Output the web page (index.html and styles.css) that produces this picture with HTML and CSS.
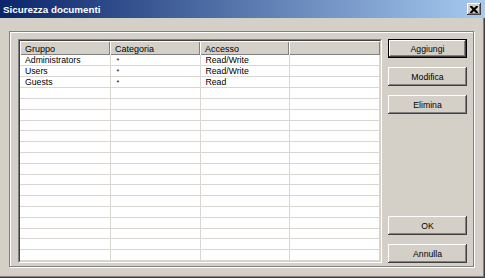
FILE: index.html
```html
<!DOCTYPE html>
<html lang="it">
<head>
    <meta charset="UTF-8">
    <title>Sicurezza documenti</title>
    <link rel="stylesheet" href="styles.css">
</head>
<body>
    <div class="dialog">
        <div class="titlebar">
            <span class="title">Sicurezza documenti</span>
            <button class="close" title="Chiudi">
                <svg width="8" height="7" viewBox="0 0 8 7">
                    <path d="M0 0h2l2 2 2-2h2v1l-2.5 2.5L8 6v1H6L4 5 2 7H0V6l2.5-2.5L0 1z" fill="#000"/>
                </svg>
            </button>
        </div>

        <div class="content">
            <div class="frame">
                <div class="listview">
                    <div class="listview-inner">
                        <table class="grid">
                            <colgroup>
                                <col class="col-gruppo">
                                <col class="col-categoria">
                                <col class="col-accesso">
                                <col>
                            </colgroup>
                            <thead>
                                <tr>
                                    <th>Gruppo</th>
                                    <th>Categoria</th>
                                    <th>Accesso</th>
                                    <th></th>
                                </tr>
                            </thead>
                            <tbody>
                                <tr><td>Administrators</td><td class="star">*</td><td>Read/Write</td><td></td></tr>
                                <tr><td>Users</td><td class="star">*</td><td>Read/Write</td><td></td></tr>
                                <tr><td>Guests</td><td class="star">*</td><td>Read</td><td></td></tr>
                                <tr><td></td><td></td><td></td><td></td></tr>
                                <tr><td></td><td></td><td></td><td></td></tr>
                                <tr><td></td><td></td><td></td><td></td></tr>
                                <tr><td></td><td></td><td></td><td></td></tr>
                                <tr><td></td><td></td><td></td><td></td></tr>
                                <tr><td></td><td></td><td></td><td></td></tr>
                                <tr><td></td><td></td><td></td><td></td></tr>
                                <tr><td></td><td></td><td></td><td></td></tr>
                                <tr><td></td><td></td><td></td><td></td></tr>
                                <tr><td></td><td></td><td></td><td></td></tr>
                                <tr><td></td><td></td><td></td><td></td></tr>
                                <tr><td></td><td></td><td></td><td></td></tr>
                                <tr><td></td><td></td><td></td><td></td></tr>
                                <tr><td></td><td></td><td></td><td></td></tr>
                                <tr><td></td><td></td><td></td><td></td></tr>
                                <tr><td></td><td></td><td></td><td></td></tr>
                            </tbody>
                        </table>
                    </div>
                </div>

                <div class="actions">
                    <div class="button-group">
                        <button class="btn btn-default">Aggiungi</button>
                        <button class="btn">Modifica</button>
                        <button class="btn">Elimina</button>
                    </div>
                    <div class="button-group">
                        <button class="btn">OK</button>
                        <button class="btn">Annulla</button>
                    </div>
                </div>
            </div>
        </div>
    </div>
</body>
</html>
```

FILE: styles.css
```css
body {
    margin: 0;
    padding: 0;
    background-color: #d4d0c8;
    font-family: "Liberation Sans", Arial, sans-serif;
    font-size: 8.7px;
    color: #000000;
}
.dialog {
    width: 485px;
    height: 278px;
    box-sizing: border-box;
    display: flex;
    flex-direction: column;
    background-color: #d4d0c8;
    box-shadow: inset -1px -1px 0 #404040, inset -2px -2px 0 #808080;
}
.titlebar {
    height: 18px;
    flex-shrink: 0;
    display: flex;
    align-items: center;
    justify-content: space-between;
    padding: 0 4px 0 3px;
    background: linear-gradient(to right, #0a246a, #a6caf0);
}
.title {
    color: #ffffff;
    font-weight: bold;
    font-size: 9.8px;
}
.close {
    width: 14px;
    height: 12px;
    padding: 0;
    border: none;
    display: flex;
    align-items: center;
    justify-content: center;
    background-color: #d4d0c8;
    box-shadow: inset -1px -1px 0 #404040, inset 1px 1px 0 #ffffff, inset -2px -2px 0 #808080;
}
.content {
    flex: 1;
    display: flex;
    padding: 13px 11px 12px 9px;
}
.frame {
    flex: 1;
    display: flex;
    gap: 6px;
    padding: 7px 5px 3px 8px;
    border: 1px solid #808080;
    box-shadow: inset 1px 1px 0 #ffffff, 1px 1px 0 #ffffff;
}
.listview {
    width: 364px;
    box-sizing: border-box;
    border: 1px solid;
    border-color: #808080 #ffffff #ffffff #808080;
}
.listview-inner {
    height: 100%;
    box-sizing: border-box;
    border: 1px solid;
    border-color: #404040 #d4d0c8 #d4d0c8 #404040;
    background-color: #ffffff;
    overflow: hidden;
}
.grid {
    width: 100%;
    table-layout: fixed;
    border-collapse: collapse;
}
.col-gruppo,
.col-categoria {
    width: 90px;
}
.col-accesso {
    width: 89px;
}
.grid th {
    height: 14px;
    padding: 1px 5px 0;
    box-sizing: border-box;
    text-align: left;
    font-weight: normal;
    font-size: 9px;
    background-color: #d4d0c8;
    box-shadow: inset 1px 1px 0 #ffffff, inset -1px -1px 0 #808080;
}
.grid td {
    height: 10.8px;
    padding: 1px 5px 0;
    box-sizing: border-box;
    line-height: 9px;
    border-right: 1px solid #dad7d2;
    border-bottom: 1px solid #dad7d2;
    white-space: nowrap;
    overflow: hidden;
}
.grid td.star {
    padding-left: 6px;
    font-size: 7px;
    vertical-align: top;
}
.actions {
    width: 79px;
    display: flex;
    flex-direction: column;
    justify-content: space-between;
}
.button-group {
    display: flex;
    flex-direction: column;
    gap: 9px;
}
.btn {
    height: 19px;
    padding: 0;
    border: none;
    font-family: inherit;
    font-size: 8.7px;
    color: #000000;
    background-color: #d4d0c8;
    box-shadow: inset -1px -1px 0 #404040, inset 1px 1px 0 #ffffff, inset -2px -2px 0 #808080;
}
.btn-default {
    border: 1px solid #000000;
}
```
